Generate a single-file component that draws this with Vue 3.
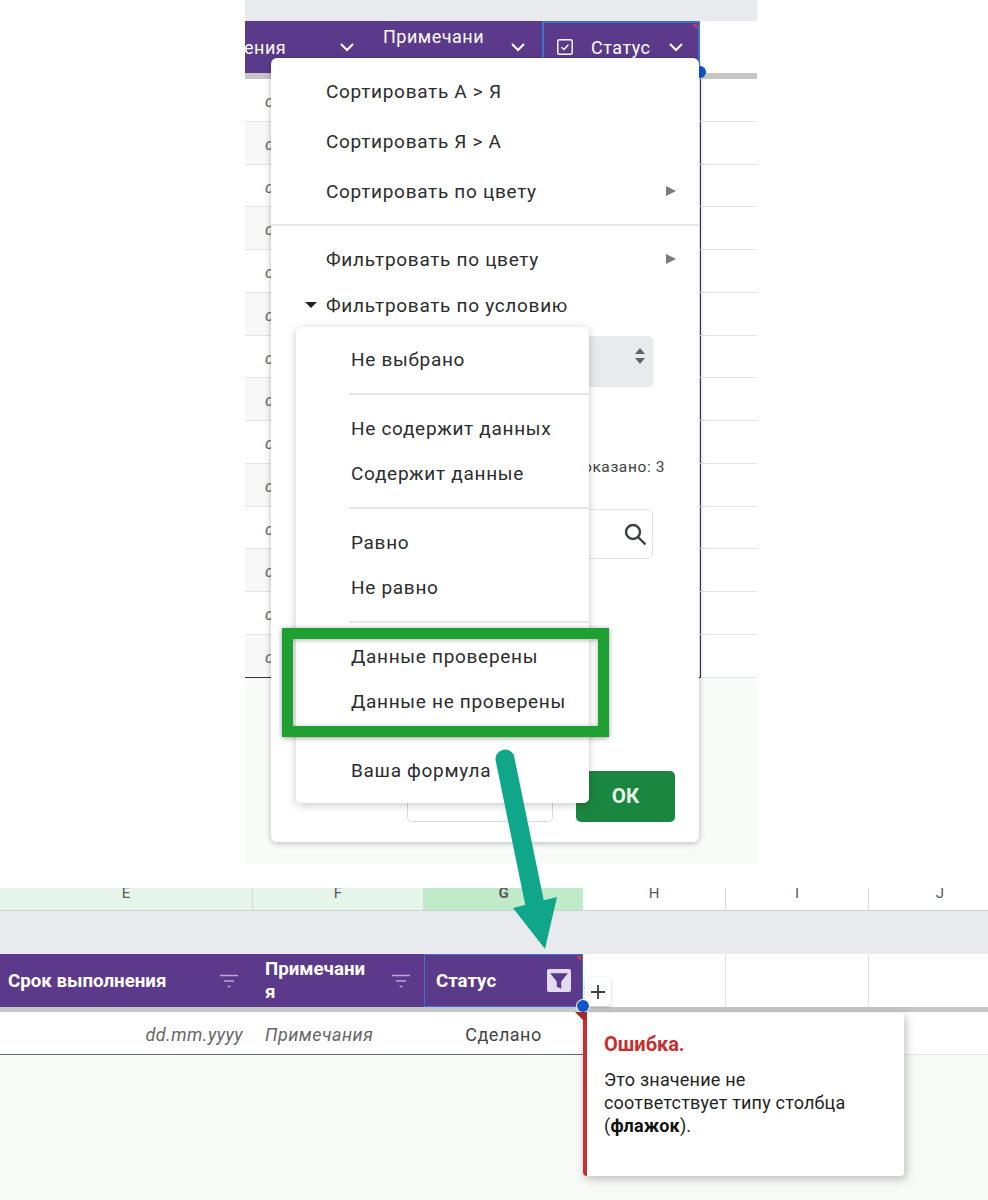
<script setup>
const rows = Array.from({ length: 14 }, (_, i) => i)
const columns = [
  { label: 'E', w: 253, tone: 'light' },
  { label: 'F', w: 171, tone: 'light' },
  { label: 'G', w: 159, tone: 'dark' },
  { label: 'H', w: 143, tone: '' },
  { label: 'I', w: 143, tone: '' },
  { label: 'J', w: 143, tone: '' }
]
const sub = [
  ['Не выбрано'],
  ['Не содержит данных', 'Содержит данные'],
  ['Равно', 'Не равно'],
  ['Данные проверены', 'Данные не проверены'],
  ['Ваша формула']
]
</script>

<template>
  <div class="page">
    <section class="top">
      <div class="band"></div>
      <div class="thead">
        <div class="th c1"><span>ения</span><svg class="chev" width="18" height="18" viewBox="0 0 18 18"><path d="M3 6l6 6 6-6" /></svg></div>
        <div class="th c2"><span class="wrap">Примечани я</span><svg class="chev" width="18" height="18" viewBox="0 0 18 18"><path d="M3 6l6 6 6-6" /></svg></div>
        <div class="th c3">
          <svg width="18" height="18" viewBox="0 0 18 18" class="check"><rect x="1.8" y="1.8" width="14.4" height="14.4" rx="1.5" /><path d="M5.5 9.2l2.4 2.4 4.5-4.8" /></svg>
          <span>Статус</span>
          <svg class="chev" width="18" height="18" viewBox="0 0 18 18"><path d="M3 6l6 6 6-6" /></svg>
          <i class="tick"></i>
          <i class="dot"></i>
        </div>
      </div>
      <div class="thick"></div>
      <div class="tbody">
        <div v-for="r in rows" :key="r" class="trow" :class="{ alt: r % 2 === 1, last: r === 13 }">
          <div class="tcell">dd.mm.yyyy</div>
          <div class="tside"></div>
        </div>
      </div>
      <div class="rest"></div>

      <div class="menu">
        <div class="mi tall">Сортировать А &gt; Я</div>
        <div class="mi tall">Сортировать Я &gt; А</div>
        <div class="mi tall">Сортировать по цвету<b class="tri"></b></div>
        <hr class="mdiv" />
        <div class="mi tall">Фильтровать по цвету<b class="tri"></b></div>
        <div class="mi short"><b class="down"></b>Фильтровать по условию</div>
        <div class="select">
          <svg width="12" height="18" viewBox="0 0 12 18"><path d="M6 1l5 6H1zM6 17l5-6H1z" fill="#5f6368" /></svg>
        </div>
        <div class="count">Показано: 3</div>
        <div class="search">
          <svg width="26" height="26" viewBox="0 0 26 26" fill="none" stroke="#3c4043" stroke-width="2.4"><circle cx="11" cy="11" r="7" /><path d="M16 16l7.5 7.5" /></svg>
        </div>
        <div class="foot">
          <div class="cancel"></div>
          <div class="ok">ОК</div>
        </div>

        <div class="submenu">
          <div v-for="(g, gi) in sub" :key="gi" class="group" :class="{ ruled: gi > 0 }">
            <div v-for="t in g" :key="t" class="si">{{ t }}</div>
          </div>
        </div>
      </div>
    </section>

    <section class="sheet">
      <div class="cols">
        <div v-for="c in columns" :key="c.label" class="col" :class="c.tone" :style="{ width: c.w + 'px' }"><span>{{ c.label }}</span></div>
      </div>
      <div class="band2"></div>
      <div class="shead">
        <div class="sth s1"><span class="nudge">Срок выполнения</span><svg class="filt" width="20" height="16" viewBox="0 0 20 16"><path d="M1 2.5h18M5 8h10M8.5 13.500h3" /></svg></div>
        <div class="sth s2"><span class="wrap2">Примечани я</span><svg class="filt" width="20" height="16" viewBox="0 0 20 16"><path d="M1 2.5h18M5 8h10M8.5 13.500h3" /></svg></div>
        <div class="sth s3">
          <span class="nudge">Статус</span>
          <span class="funnel"><svg width="20" height="20" viewBox="0 0 18 18"><path d="M1 2h16l-6 7.500V16l-4-1.800V9.500z" fill="#5b3a8b" /></svg></span>
          <i class="tick"></i>
        </div>
        <div class="blank b1"></div>
        <div class="blank b2"></div>
        <div class="blank"></div>
      </div>
      <div class="thick2"></div>
      <div class="srow">
        <div class="sd d1">dd.mm.yyyy</div>
        <div class="sd d2">Примечания</div>
        <div class="sd d3">Сделано</div>
      </div>
      <div class="plus">
        <svg width="16" height="16" viewBox="0 0 16 16"><path d="M8 1v14M1 8h14" stroke="#3c4043" stroke-width="1.800" /></svg>
      </div>
      <i class="dot2"></i>
      <div class="tip">
        <b class="corner"></b>
        <div class="tip-title">Ошибка.</div>
        <p>Это значение не соответствует типу столбца (<strong>флажок</strong>).</p>
      </div>
    </section>

    <div class="greenbox"></div>
    <svg class="arrow" width="988" height="1200" viewBox="0 0 988 1200">
      <path d="M505 759L535 905" stroke="#10a68a" stroke-width="19" stroke-linecap="round" fill="none" />
      <path d="M513 908L557 897L545 949z" fill="#10a68a" />
    </svg>
  </div>
</template>

<style scoped>
.page {
  position: relative;
  width: 988px;
  height: 1200px;
  overflow: hidden;
  background: #fff;
  font-family: Roboto, "Noto Sans", sans-serif;
  color: #202124;
}
.top {
  position: relative;
  width: 512px;
  height: 864px;
  margin-left: 245px;
  display: flex;
  flex-direction: column;
  background: #f9fbf9;
}
.band { height: 21px; background: #e8eaed; }
.thead {
  height: 52px;
  display: grid;
  grid-template-columns: 130px 167px 158px 57px;
  background: #fff;
}
.th {
  display: flex;
  align-items: center;
  background: #5b3a8b;
  color: #fff;
  font-size: 18px;
  letter-spacing: .5px;
  overflow: hidden;
}
.c1 { justify-content: space-between; padding: 0 19px 0 0; }
.c1 span { margin-left: -1px; }
.c2 { padding: 3px 15px 0 8px; justify-content: space-between; align-items: flex-start; line-height: 26px; }
.c2 .chev { margin-top: 14px; }
.wrap { width: 108px; word-break: break-all; }
.c3 {
  position: relative;
  overflow: visible;
  gap: 17px;
  padding: 0 15px 0 12px;
  border: 2px solid #3a74d0;
}
.c3 span { flex: 1; }
.chev { fill: none; stroke: #fff; stroke-width: 2; flex: none; }
.check { fill: none; stroke: #fff; stroke-width: 1.400; flex: none; }
.dot {
  position: absolute;
  right: -8px;
  bottom: -7px;
  width: 12px;
  height: 12px;
  border-radius: 50%;
  background: #1155cc;
  z-index: 2;
}
.thick { height: 6px; background: #c6c6c6; }
.tbody { display: flex; flex-direction: column; }
.trow {
  height: 42.77px;
  box-sizing: border-box;
  display: flex;
  border-bottom: 1px solid #e4e6e6;
}
.tcell {
  width: 456px;
  padding-left: 20px;
  box-sizing: border-box;
  font-size: 16.500px;
  font-style: italic;
  color: #666;
  line-height: 46px;
  white-space: nowrap;
  overflow: hidden;
  border-right: 1px solid #3c2a63;
  background: #fff;
}
.alt .tcell { background: #f8f8f8; }
.tside { flex: 1; background: #fff; }
.last .tcell { box-shadow: 0 1px 0 #333; }
.rest { flex: 1; }

.menu {
  position: absolute;
  left: 26px;
  top: 58px;
  width: 428px;
  height: 784px;
  box-sizing: border-box;
  padding: 8px 46px 0 25px;
  background: #fff;
  border-radius: 6px;
  box-shadow: 0 1px 6px rgba(0, 0, 0, .28);
  display: flex;
  flex-direction: column;
  z-index: 3;
}
.mi {
  position: relative;
  display: flex;
  align-items: center;
  padding-left: 30px;
  font-size: 19px;
  letter-spacing: .7px;
  color: #2b2c2e;
}
.tall { height: 50px; }
.short { height: 42px; }
.tri {
  position: absolute;
  right: -23px;
  top: 20px;
  border-left: 10px solid #7b7b7b;
  border-top: 5px solid transparent;
  border-bottom: 5px solid transparent;
}
.down {
  position: absolute;
  left: 9px;
  top: 18px;
  border-top: 6px solid #202124;
  border-left: 6px solid transparent;
  border-right: 6px solid transparent;
}
.mdiv {
  height: 2px;
  border: 0;
  background: #e8e8e8;
  margin: 8px -46px 8px -25px;
}
.select {
  height: 51px;
  margin-top: 10px;
  background: #e8eaed;
  border-radius: 5px;
  display: flex;
  align-items: flex-start;
  justify-content: flex-end;
  padding: 11px 7px 0 0;
  box-sizing: border-box;
}
.count {
  margin-top: 68px;
  margin-right: -12px;
  height: 24px;
  line-height: 24px;
  text-align: right;
  font-size: 15.500px;
  letter-spacing: .6px;
  color: #3c4043;
}
.search {
  height: 50px;
  margin-top: 30px;
  box-sizing: border-box;
  border: 1px solid #e3e3e3;
  border-radius: 5px;
  display: flex;
  align-items: center;
  justify-content: flex-end;
  padding-right: 4px;
}
.foot {
  margin: 212px -22px 0 0;
  display: flex;
  justify-content: flex-end;
  gap: 23px;
}
.cancel {
  width: 146px;
  height: 51px;
  box-sizing: border-box;
  border: 1px solid #dcdcdc;
  border-radius: 5px;
}
.ok {
  width: 99px;
  height: 51px;
  padding-bottom: 2px;
  box-sizing: border-box;
  background: #1b8640;
  color: #e9f5ec;
  border-radius: 5px;
  display: flex;
  align-items: center;
  justify-content: center;
  font-size: 20.500px;
  font-weight: 700;
}
.submenu {
  position: absolute;
  left: 25px;
  top: 269px;
  width: 293px;
  height: 476px;
  box-sizing: border-box;
  padding-top: 10px;
  background: #fff;
  border-radius: 5px;
  box-shadow: 0 2px 8px rgba(0, 0, 0, .22);
}
.group { margin-left: 53px; padding: 0 0 10.500px; }
.group.ruled { border-top: 2px solid #e6e6e6; padding-top: 10.500px; }
.si {
  height: 45.500px;
  display: flex;
  align-items: center;
  margin-left: 2px;
  font-size: 19px;
  letter-spacing: .7px;
  color: #2b2c2e;
  white-space: nowrap;
}

.sheet {
  position: relative;
  margin-top: 24px;
  height: 312px;
  background: #f8faf8;
}
.cols { display: flex; height: 23px; overflow: hidden; background: #fff; }
.col {
  flex: none;
  box-sizing: border-box;
  display: flex;
  justify-content: center;
  border-right: 1px solid #d8d8d8;
  font-size: 15px;
  line-height: 10px;
  color: #5a5a5a;
  border-bottom: 1px solid #cfd2d2;
}
.col.light { background: #e6f5ea; }
.col.dark { background: #c0ebc9; font-weight: 700; border-right: 0; }
.band2 { height: 43px; background: #e8eaed; }
.shead { display: flex; height: 53px; background: #fff; }
.sth {
  position: relative;
  display: flex;
  align-items: center;
  justify-content: space-between;
  background: #5b3a8b;
  color: #fff;
  font-size: 18.700px;
  font-weight: 700;
  line-height: 23px;
  box-sizing: border-box;
}
.nudge { padding-top: 2px; }
.s1 { width: 253px; padding: 0 14px 0 8px; }
.s2 { width: 171px; padding: 0 13px 0 12px; }
.s3 { width: 159px; padding: 0 11px 0 11px; border: 1.500px solid #3a74d0; }
.wrap2 { width: 110px; word-break: break-all; }
.filt { fill: none; stroke: #b9a9d6; stroke-width: 1.500; flex: none; }
.funnel {
  width: 24px;
  height: 23px;
  background: #e3dbf0;
  border-radius: 2px;
  display: flex;
  align-items: center;
  justify-content: center;
}
.tick {
  position: absolute;
  right: 1px;
  top: 1px;
  border-top: 5px solid #d9364a;
  border-left: 5px solid transparent;
}
.blank { width: 143px; border-right: 1px solid #e3e3e3; box-sizing: border-box; }
.blank:last-child { border-right: 0; flex: 1; }
.thick2 { height: 5px; background: #c6c6c6; }
.srow {
  display: flex;
  height: 43px;
  box-sizing: border-box;
  background: #fff;
  border-bottom: 1px solid #e4e6e6;
  font-size: 18px;
  line-height: 45px;
  letter-spacing: .5px;
}
.sd { box-sizing: border-box; box-shadow: 0 1px 0 #5d6b66; }
.d1 { width: 253px; text-align: right; padding-right: 10px; font-style: italic; color: #666; }
.d2 { width: 171px; padding-left: 12px; font-style: italic; color: #666; }
.d3 { width: 159px; text-align: center; color: #444; }
.plus {
  position: absolute;
  left: 585px;
  top: 89px;
  width: 26px;
  height: 29px;
  background: #fff;
  border-radius: 4px;
  box-shadow: 0 1px 3px rgba(0, 0, 0, .25);
  display: flex;
  align-items: center;
  justify-content: center;
}
.dot2 {
  position: absolute;
  left: 577px;
  top: 112px;
  width: 12px;
  height: 12px;
  border-radius: 50%;
  background: #1155cc;
  box-shadow: 0 0 0 1px #fff;
}
.tip {
  position: absolute;
  left: 583px;
  top: 125px;
  width: 321px;
  height: 163px;
  box-sizing: border-box;
  padding: 19px 40px 0 17px;
  background: #fff;
  border-left: 4px solid #c5302e;
  border-radius: 4px;
  box-shadow: 2px 3px 10px rgba(0, 0, 0, .25);
}
.corner {
  position: absolute;
  left: -12px;
  top: -1px;
  border-top: 8px solid #a52a28;
  border-left: 8px solid transparent;
  border-right: 4px solid #a52a28;
}
.tip-title {
  font-size: 20px;
  font-weight: 700;
  color: #c5302e;
  line-height: 24px;
}
.tip p {
  margin: 12px 0 0;
  font-size: 18px;
  line-height: 23px;
  letter-spacing: .2px;
  color: #1f1f1f;
}
.tip strong { color: #111; }

.greenbox {
  position: absolute;
  left: 282px;
  top: 628px;
  width: 327px;
  height: 109px;
  box-sizing: border-box;
  border: 11px solid #1ea032;
  box-shadow: 0 1px 5px rgba(0, 0, 0, .4), inset 0 1px 5px rgba(0, 0, 0, .3);
  z-index: 4;
}
.arrow {
  position: absolute;
  left: 0;
  top: 0;
  z-index: 5;
  pointer-events: none;
}
</style>
